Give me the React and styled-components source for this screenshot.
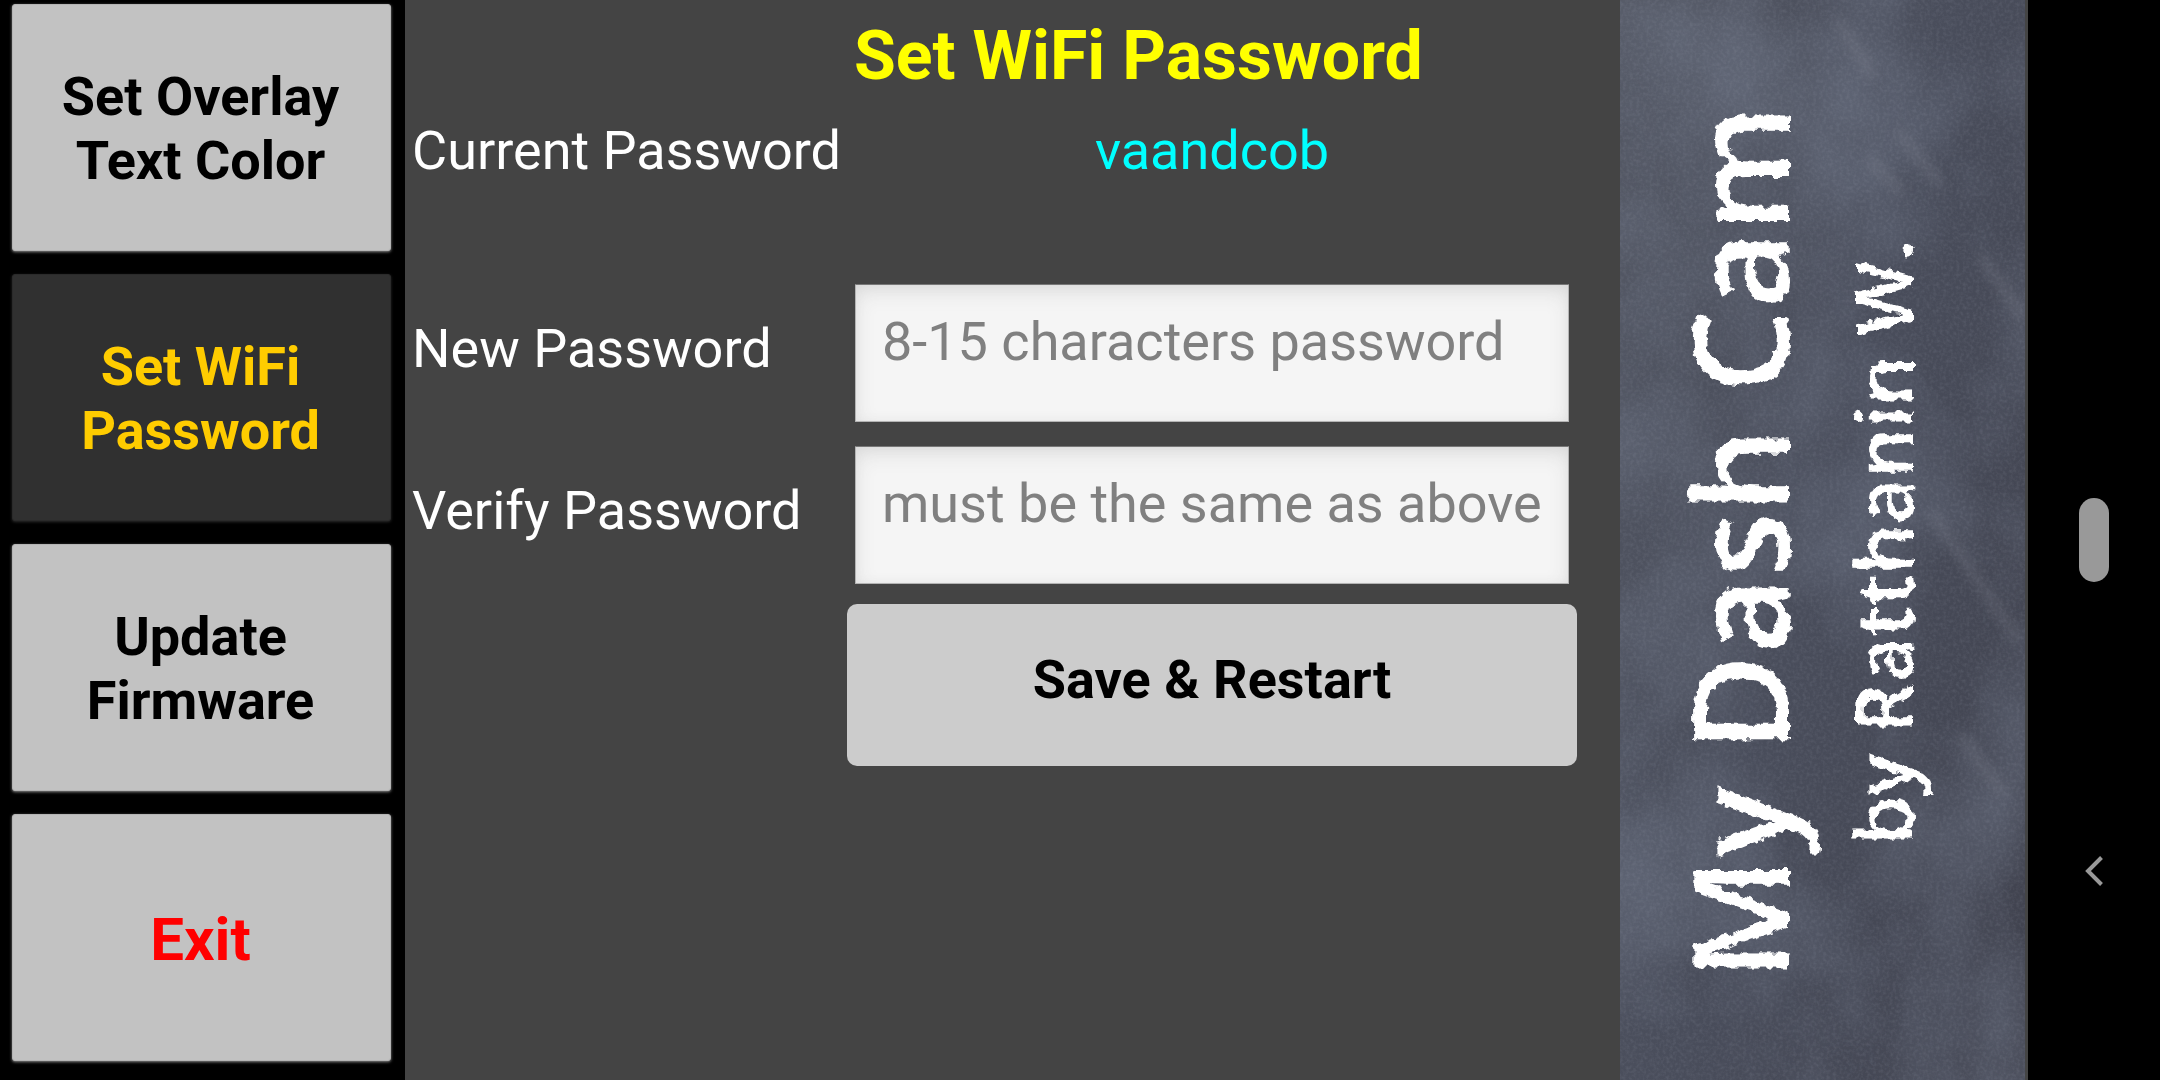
import React, { useState } from "react";
import styled, { createGlobalStyle } from "styled-components";

const GlobalStyle = createGlobalStyle`
  *, *::before, *::after { box-sizing: border-box; }
  body {
    margin: 0;
    background: #000;
    font-family: Roboto, "Liberation Sans", sans-serif;
  }
  button, input { font-family: inherit; }
`;

const Screen = styled.div`
  display: grid;
  grid-template-columns: minmax(0, 1fr) 132px;
  min-height: 100vh;
`;

const AppArea = styled.div`
  display: grid;
  grid-template-columns: minmax(0, 1fr) minmax(0, 3fr) minmax(0, 1fr);
  padding-right: 3px;
  background: #444;
`;

const Sidebar = styled.nav`
  display: grid;
  grid-template-rows: repeat(4, 1fr);
  gap: 23px;
  padding: 4px 14px 19px 12px;
  background: #000;
`;

const MenuButton = styled.button`
  padding: ${(p) => (p.$danger ? 4 : 2)}px 24px 0 22px;
  border: 1px solid ${(p) => (p.$active ? "#2a2a2a" : "#b4b4b4")};
  border-radius: 3px;
  background: ${(p) => (p.$active ? "#303030" : "#c2c2c2")};
  box-shadow: 0 1px 3px ${(p) => (p.$active ? "#2c2c2c" : "#8a8a8a")};
  color: ${(p) => (p.$active ? "#ffcc00" : p.$danger ? "#ff0000" : "#000")};
  font-size: ${(p) => (p.$danger ? 60 : 54)}px;
  font-weight: 700;
  line-height: 64px;
  cursor: pointer;
`;

const Main = styled.main`
  padding-right: 43px;
`;

const Form = styled.form`
  display: grid;
  grid-template-columns: minmax(0, 442fr) minmax(0, 730fr);
  grid-template-rows: 112px 78px 90px 162px 162px 162px;
  align-items: center;
`;

const Title = styled.h1`
  grid-column: 2;
  margin: 0;
  padding-left: 7px;
  color: #ffff00;
  font-size: 68px;
  font-weight: 700;
  line-height: 80px;
  white-space: nowrap;
`;

const Label = styled.label`
  grid-column: 1;
  padding-left: 7px;
  color: #fff;
  font-size: 54px;
  line-height: 64px;
  white-space: nowrap;
`;

const CurrentValue = styled.output`
  grid-column: 2;
  color: #00ffff;
  font-size: 54px;
  line-height: 64px;
  text-align: center;
`;

const Field = styled.input`
  grid-column: 2;
  grid-row: ${(p) => p.$row};
  height: 138px;
  margin: 0 8px 16px;
  padding: 0 24px 24px 26px;
  border: 1px solid #b4b4b4;
  border-top-color: #777;
  border-radius: 1px;
  background: #f5f5f5;
  box-shadow: inset 0 8px 24px -6px #d2d2d2, inset 0 0 10px #ececec;
  color: #000;
  font-size: 54px;
  outline: none;

  &::placeholder {
    color: #808080;
    opacity: 1;
  }
`;

const FieldLabel = styled(Label)`
  grid-row: ${(p) => p.$row};
  padding-bottom: 24px;
`;

const SaveButton = styled.button`
  grid-column: 2;
  grid-row: 6;
  align-self: stretch;
  padding: 0 0 10px;
  border: 0;
  border-radius: 10px;
  background: #ccc;
  color: #000;
  font-size: 54px;
  font-weight: 700;
  line-height: 64px;
  cursor: pointer;
`;

const Board = styled.aside`
  position: relative;
  display: flex;
  align-items: center;
  justify-content: center;
  padding: 6px 54px 0 0;
  overflow: hidden;
  background: linear-gradient(105deg, #525662 0%, #494d5b 50%, #40424e 100%);
`;

const Texture = styled.svg`
  position: absolute;
  inset: 0;
  width: 100%;
  height: 100%;
`;

const Signature = styled.div`
  position: relative;
  display: flex;
  flex-direction: column;
  gap: 24px;
  writing-mode: vertical-rl;
  transform: rotate(180deg);
  filter: url(#chalk-edge);
  color: #fff;
  font-family: "Open Sans", "Noto Sans", sans-serif;
  text-align: center;
  white-space: nowrap;
`;

const AppName = styled.p`
  margin: 0;
  font-size: 133px;
  font-weight: 600;
  line-height: 150px;
`;

const Author = styled.p`
  margin: 0;
  font-size: 79px;
  font-weight: 600;
  line-height: 92px;
`;

const SystemNav = styled.nav`
  display: grid;
  grid-template-rows: 1fr 84px 1fr;
  justify-items: center;
  background: #000;
`;

const HomePill = styled.button`
  grid-row: 2;
  width: 30px;
  padding: 0;
  border: 0;
  border-radius: 15px;
  background: #999;
`;

const BackButton = styled.button`
  grid-row: 3;
  align-self: center;
  display: grid;
  place-items: center;
  width: 80px;
  height: 80px;
  margin-top: 80px;
  padding: 0;
  border: 0;
  background: transparent;
`;

function Chalkboard() {
  return (
    <Texture aria-hidden="true">
      <defs>
        <filter id="board-haze" x="0" y="0" width="100%" height="100%" colorInterpolationFilters="sRGB">
          <feTurbulence type="fractalNoise" baseFrequency="0.007 0.005" numOctaves="4" seed="8" />
          <feColorMatrix values="0 0 0 0 0.44  0 0 0 0 0.47  0 0 0 0 0.54  1.1 0 0 0 -0.4" />
        </filter>
        <filter id="board-grain" x="0" y="0" width="100%" height="100%" colorInterpolationFilters="sRGB">
          <feTurbulence type="fractalNoise" baseFrequency="0.3" numOctaves="2" seed="3" />
          <feColorMatrix values="0 0 0 0 0.7  0 0 0 0 0.72  0 0 0 0 0.78  0.25 0 0 0 -0.1" />
        </filter>
        <filter id="chalk-edge" x="-5%" y="-5%" width="110%" height="110%">
          <feTurbulence type="fractalNoise" baseFrequency="0.12" numOctaves="2" seed="5" result="n" />
          <feDisplacementMap in="SourceGraphic" in2="n" scale="9" xChannelSelector="R" yChannelSelector="G" />
        </filter>
        <filter id="smear-soft" x="-50%" y="-50%" width="200%" height="200%">
          <feGaussianBlur stdDeviation="6" />
        </filter>
      </defs>
      <rect width="100%" height="100%" filter="url(#board-haze)" />
      <rect width="100%" height="100%" filter="url(#board-grain)" />
      <g fill="none" stroke="#9a9ca8" strokeWidth="8" opacity="0.24" filter="url(#smear-soft)">
        <path d="M218 20l36 58M278 132l44 54M248 158l36 36M360 255l44 64M310 510l88 130M340 735l44 60" />
      </g>
    </Texture>
  );
}

export default function App() {
  const [next, setNext] = useState("");
  const [verify, setVerify] = useState("");

  return (
    <>
      <GlobalStyle />
      <Screen>
        <AppArea>
          <Sidebar aria-label="Settings">
            <MenuButton type="button">Set Overlay Text Color</MenuButton>
            <MenuButton type="button" $active aria-current="page">
              Set WiFi Password
            </MenuButton>
            <MenuButton type="button">Update Firmware</MenuButton>
            <MenuButton type="button" $danger>
              Exit
            </MenuButton>
          </Sidebar>
          <Main>
            <Form onSubmit={(e) => e.preventDefault()}>
              <Title>Set WiFi Password</Title>
              <Label htmlFor="current">Current Password</Label>
              <CurrentValue id="current">vaandcob</CurrentValue>
              <FieldLabel htmlFor="next" $row={4}>
                New Password
              </FieldLabel>
              <Field
                id="next"
                type="password"
                $row={4}
                placeholder="8-15 characters password"
                value={next}
                onChange={(e) => setNext(e.target.value)}
              />
              <FieldLabel htmlFor="verify" $row={5}>
                Verify Password
              </FieldLabel>
              <Field
                id="verify"
                type="password"
                $row={5}
                placeholder="must be the same as above"
                value={verify}
                onChange={(e) => setVerify(e.target.value)}
              />
              <SaveButton type="submit">Save &amp; Restart</SaveButton>
            </Form>
          </Main>
          <Board>
            <Chalkboard />
            <Signature>
              <AppName>My Dash Cam</AppName>
              <Author>by Ratthanin W.</Author>
            </Signature>
          </Board>
        </AppArea>
        <SystemNav aria-label="System">
          <HomePill type="button" aria-label="Home" />
          <BackButton type="button" aria-label="Back">
            <svg width="18" height="30" viewBox="0 0 18 30" fill="none" stroke="#999" strokeWidth="4">
              <path d="M16.500 1.500L3 15L16.500 28.500" />
            </svg>
          </BackButton>
        </SystemNav>
      </Screen>
    </>
  );
}
